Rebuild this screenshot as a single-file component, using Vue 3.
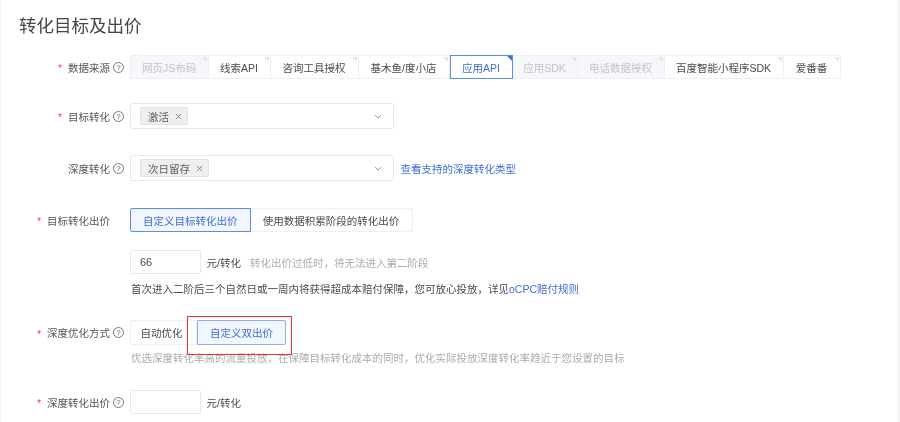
<template>
  <div class="page">
    <h2 class="title">转化目标及出价</h2>

    <div class="row row-source">
      <div class="label"><i class="star">*</i>数据来源<span class="help">?</span></div>
      <div class="segments">
        <button
          v-for="item in sources"
          :key="item.name"
          class="seg corner"
          :class="{ active: item.name === source, off: item.off }"
          :style="{ width: item.width + 'px' }"
          @click="!item.off && (source = item.name)"
        >{{ item.name }}</button>
      </div>
    </div>

    <div class="row row-goal">
      <div class="label"><i class="star">*</i>目标转化<span class="help">?</span></div>
      <div class="select">
        <span class="tag">激活<svg class="x" viewBox="0 0 8 8"><path d="M1 1l6 6M7 1L1 7" /></svg></span>
        <svg class="chevron" viewBox="0 0 12 8"><path d="M1.5 1.5L6 6l4.5-4.5" /></svg>
      </div>
    </div>

    <div class="row row-deep">
      <div class="label">深度转化<span class="help">?</span></div>
      <div class="select">
        <span class="tag">次日留存<svg class="x" viewBox="0 0 8 8"><path d="M1 1l6 6M7 1L1 7" /></svg></span>
        <svg class="chevron" viewBox="0 0 12 8"><path d="M1.5 1.5L6 6l4.5-4.5" /></svg>
      </div>
      <a class="link deep-link">查看支持的深度转化类型</a>
    </div>

    <div class="row row-bid">
      <div class="label"><i class="star">*</i>目标转化出价</div>
      <div class="segments">
        <button class="seg active first-bid">自定义目标转化出价</button>
        <button class="seg second-bid">使用数据积累阶段的转化出价</button>
      </div>
    </div>

    <div class="row row-price">
      <div class="label"></div>
      <input class="price" v-model="price" />
      <span class="unit">元/转化</span>
      <span class="hint">转化出价过低时，将无法进入第二阶段</span>
    </div>

    <div class="row row-note">
      <div class="label"></div>
      <p class="note">首次进入二阶后三个自然日或一周内将获得超成本赔付保障，您可放心投放，详见<a class="link">oCPC赔付规则</a></p>
    </div>

    <div class="row row-mode">
      <div class="label"><i class="star">*</i>深度优化方式<span class="help">?</span></div>
      <div class="segments">
        <button class="seg mode-auto">自动优化</button>
        <button class="seg active mode-custom">自定义双出价</button>
        <span class="red-box"></span>
      </div>
    </div>

    <div class="row row-mode-hint">
      <div class="label"></div>
      <p class="hint mode-hint">优选深度转化率高的流量投放，在保障目标转化成本的同时，优化实际投放深度转化率趋近于您设置的目标</p>
    </div>

    <div class="row row-deep-price">
      <div class="label"><i class="star">*</i>深度转化出价<span class="help">?</span></div>
      <input class="price" />
      <span class="unit">元/转化</span>
    </div>
  </div>
</template>

<script setup>
import { ref } from 'vue'

const source = ref('应用API')
const price = ref('66')

// widths come from the reference, the tabs are not content sized
const sources = [
  { name: '网页JS布码', width: 78.5, off: true },
  { name: '线索API', width: 62 },
  { name: '咨询工具授权', width: 88 },
  { name: '基木鱼/度小店', width: 91 },
  { name: '应用API', width: 63 },
  { name: '应用SDK', width: 65, off: true },
  { name: '电话数据授权', width: 87, off: true },
  { name: '百度智能小程序SDK', width: 119 },
  { name: '爱番番', width: 57 }
]
</script>

<style>
html,
body {
  margin: 0;
  background: #fff;
  overflow: hidden;
}
</style>

<style scoped>
.page {
  box-sizing: border-box;
  width: 900px;
  height: 422px;
  padding: 17px 0 0 19px;
  background: #fff;
  border-left: 1px solid #f3f5fb;
  border-right: 3px solid #f7f7f8;
  font-family: "Liberation Sans", "Noto Sans CJK SC", sans-serif;
  font-size: 10.5px;
  color: #4a4a4f;
  overflow: hidden;
  filter: blur(0.35px);
}

.title {
  margin: 0 0 19px -1px;
  font-size: 17.5px;
  line-height: 19px;
  font-weight: 400;
  color: #45454a;
}

.row {
  display: flex;
  align-items: center;
  margin-left: -19px;
}

.label {
  flex: none;
  width: 123px;
  margin-right: 6px;
  display: flex;
  align-items: center;
  justify-content: flex-end;
  color: #55555b;
}

.star {
  margin-right: 6px;
  font-style: normal;
  color: #ee4b4b;
  line-height: 8px;
  height: 6px;
}

.help {
  flex: none;
  box-sizing: border-box;
  width: 11px;
  height: 11px;
  margin-left: 3px;
  border: 1px solid #77777d;
  border-radius: 50%;
  font-size: 8px;
  line-height: 9px;
  text-align: center;
  color: #66666c;
}

.row-source { height: 24px; }
.row-goal { height: 26px; margin-top: 24px; }
.row-deep { height: 26px; margin-top: 26px; }
.row-bid { height: 24px; margin-top: 27px; }
.row-bid .label { width: 109px; margin-right: 20px; }
.row-price { height: 24px; margin-top: 18px; }
.row-note { height: 16px; margin-top: 7px; }
.row-mode { height: 25px; margin-top: 23px; }
.row-mode-hint { height: 16px; margin-top: 5px; }
.row-deep-price { height: 24px; margin-top: 24px; }

.segments {
  position: relative;
  display: flex;
}

.seg {
  position: relative;
  box-sizing: border-box;
  height: 24px;
  padding: 0;
  border: 1px solid #eceff6;
  border-left-width: 0;
  background: #fff;
  font: inherit;
  color: #4a4a4f;
  cursor: pointer;
}

.seg:first-child {
  border-left-width: 1px;
  border-radius: 2px 0 0 2px;
}

.seg:last-of-type {
  border-radius: 0 2px 2px 0;
}

.seg.off {
  background: #f5f7fb;
  color: #c2c4ca;
  cursor: default;
}

.seg.active {
  border: 1px solid #5b8def;
  background: #fff;
  color: #3f6fd8;
}

.corner::after {
  content: "";
  position: absolute;
  top: 1px;
  right: 1px;
  border-top: 5px solid #e3e6ee;
  border-left: 5px solid transparent;
}

.corner.active::after {
  top: 0;
  right: 0;
  border-top-color: #3f6fd8;
}

.first-bid {
  width: 120.5px;
  background: #f2f6ff !important;
  border-radius: 2px 0 0 2px;
}

.second-bid {
  width: 162px;
}

.mode-auto {
  width: 67px;
  height: 25px;
  padding-right: 4px;
}

.mode-custom {
  width: 89px;
  height: 25px;
  border-radius: 2px;
  background: #f2f6ff !important;
  border-color: #8fb0f0 !important;
}

/* the annotation drawn over the screenshot */
.red-box {
  position: absolute;
  left: 57px;
  top: -4px;
  width: 105px;
  height: 39px;
  box-sizing: border-box;
  border: 1.5px solid #e5332e;
  pointer-events: none;
}

.select {
  position: relative;
  box-sizing: border-box;
  flex: none;
  width: 263.5px;
  height: 26px;
  padding-left: 9px;
  display: flex;
  align-items: center;
  border: 1px solid #e6e9f2;
  border-radius: 2px;
}

.tag {
  display: flex;
  align-items: center;
  box-sizing: border-box;
  height: 18px;
  padding: 0 5px 0 7px;
  border: 1px solid #e2e2e4;
  border-radius: 2px;
  background: #efeff0;
  color: #5b5b60;
}

.x {
  width: 7px;
  height: 7px;
  margin-left: 6px;
  fill: none;
  stroke: #77777c;
  stroke-width: 1;
}

.chevron {
  position: absolute;
  right: 11px;
  top: 10px;
  width: 8px;
  height: 5.5px;
  fill: none;
  stroke: #77777c;
  stroke-width: 1.2;
}

.link {
  color: #3f6fd8;
  cursor: pointer;
}

.deep-link {
  margin-left: 7px;
}

.price {
  box-sizing: border-box;
  width: 70.5px;
  height: 24px;
  padding: 0 9px;
  border: 1px solid #e6e9f2;
  border-radius: 2px;
  outline: none;
  font: inherit;
  font-size: 11px;
  color: #4a4a4f;
}

.unit {
  margin-left: 6px;
  color: #4a4a4f;
}

.hint {
  margin-left: 9px;
  color: #a9abb1;
}

.note,
.mode-hint {
  margin: 0 0 0 1px;
  line-height: 16px;
}

.mode-hint {
  color: #a9abb1;
}
</style>
